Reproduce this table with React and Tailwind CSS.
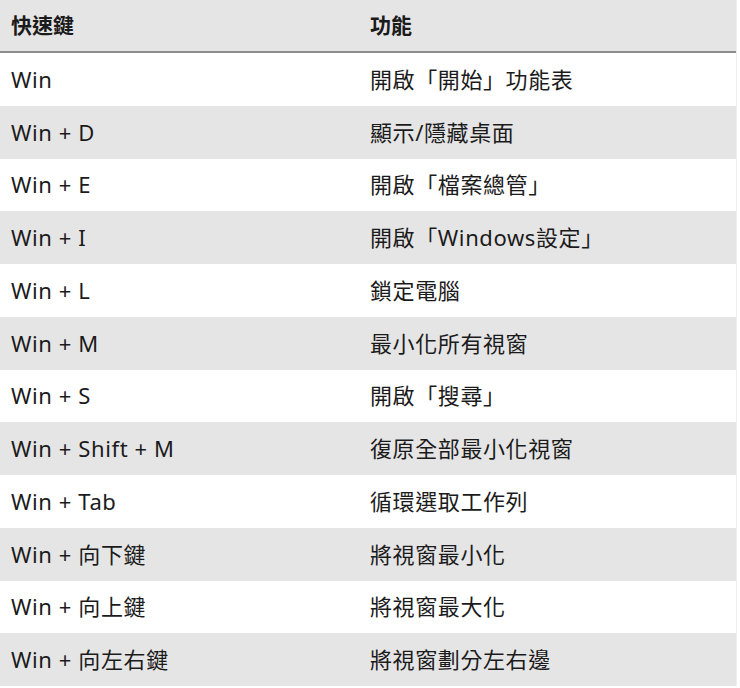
import React from "react";

const rows = [
  ["Win", "開啟「開始」功能表"],
  ["Win + D", "顯示/隱藏桌面"],
  ["Win + E", "開啟「檔案總管」"],
  ["Win + I", "開啟「Windows設定」"],
  ["Win + L", "鎖定電腦"],
  ["Win + M", "最小化所有視窗"],
  ["Win + S", "開啟「搜尋」"],
  ["Win + Shift + M", "復原全部最小化視窗"],
  ["Win + Tab", "循環選取工作列"],
  ["Win + 向下鍵", "將視窗最小化"],
  ["Win + 向上鍵", "將視窗最大化"],
  ["Win + 向左右鍵", "將視窗劃分左右邊"],
];

export default function App() {
  return (
    <div
      className="w-[740px] h-[688px] overflow-hidden bg-white text-[#1b1b1b]"
      style={{ fontFamily: '"Noto Sans", "Noto Sans CJK TC", sans-serif' }}
    >
      <div className="w-[737px] border-r border-[#f0f0f0]">
        <div className="flex h-[53px] items-center bg-[#e6e5e6] border-b-2 border-[#8c8c8c] text-[21px] font-semibold">
          <div className="w-[370px] pl-[11px]">快速鍵</div>
          <div className="flex-1">功能</div>
        </div>
        {rows.map(([key, desc], i) => (
          <div
            key={key}
            className={`flex h-[52.75px] items-center text-[22px] tracking-[0.6px] ${i % 2 === 1 ? "bg-[#e6e5e6]" : "bg-white"}`}
          >
            <div className="w-[370px] pl-[11px]">{key}</div>
            <div className="flex-1">{desc}</div>
          </div>
        ))}
      </div>
    </div>
  );
}
